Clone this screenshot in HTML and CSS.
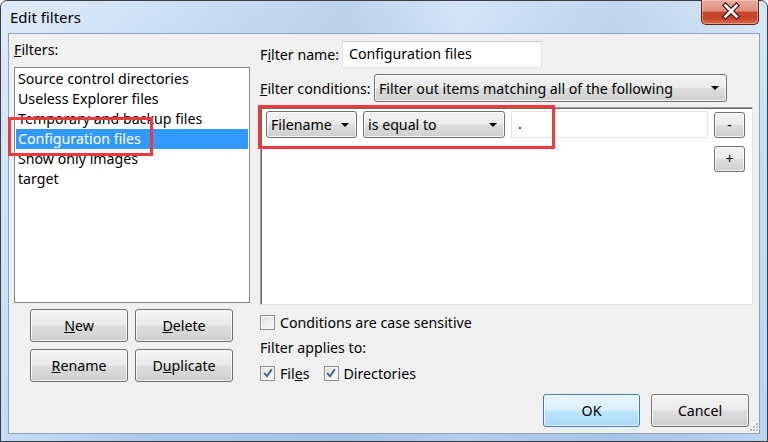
FILE: index.html
```html
<!DOCTYPE html>
<html lang="en">
<head>
  <meta charset="UTF-8">
  <title>Edit filters</title>
  <link rel="stylesheet" href="styles.css">
</head>
<body>
  <div class="screen">
    <div class="window">
      <div class="titlebar">
        <span class="title">Edit filters</span>
        <div class="close">
          <svg width="58" height="24" viewBox="0 0 58 24">
            <path d="M23.5 6.5 L34.5 17.5 M34.5 6.5 L23.5 17.5" stroke="#4b1710" stroke-width="5" stroke-linecap="square"/>
            <path d="M23.5 6.5 L34.5 17.5 M34.5 6.5 L23.5 17.5" stroke="#ffffff" stroke-width="2.6" stroke-linecap="square"/>
          </svg>
        </div>
      </div>

      <div class="client">
        <div class="left">
          <div class="label"><u>F</u>ilters:</div>
          <ul class="filter-list">
            <li>Source control directories</li>
            <li>Useless Explorer files</li>
            <li>Temporary and backup files</li>
            <li class="selected">Configuration files</li>
            <li>Show only images</li>
            <li>target</li>
          </ul>
          <div class="list-buttons">
            <div class="btn"><u>N</u>ew</div>
            <div class="btn"><u>D</u>elete</div>
            <div class="btn"><u>R</u>ename</div>
            <div class="btn">D<u>u</u>plicate</div>
          </div>
        </div>

        <div class="right">
          <div class="field-row name-row">
            <span class="name-label">F<u>i</u>lter name:</span>
            <div class="textbox name-input">Configuration files</div>
          </div>
          <div class="field-row cond-row">
            <span class="cond-label"><u>F</u>ilter conditions:</span>
            <div class="combo cond-combo">Filter out items matching all of the following<span class="arrow"></span></div>
          </div>

          <div class="conditions">
            <div class="combo">Filename<span class="arrow"></span></div>
            <div class="combo">is equal to<span class="arrow"></span></div>
            <div class="textbox value-input">.</div>
            <div class="btn small minus">-</div>
            <div class="btn small plus">+</div>
          </div>

          <div class="check-row case-row">
            <span class="checkbox"></span>Conditions are case sensitive
          </div>
          <div class="applies">Filter applies to:</div>
          <div class="check-row applies-row">
            <span class="checkbox checked">
              <svg width="10" height="10" viewBox="0 0 10 10"><path d="M1.2 5 L4 8.3 L8.8 1.2" fill="none" stroke="#3d5a98" stroke-width="1.9"/></svg>
            </span>Fil<u>e</u>s
            <span class="checkbox checked dirs">
              <svg width="10" height="10" viewBox="0 0 10 10"><path d="M1.2 5 L4 8.3 L8.8 1.2" fill="none" stroke="#3d5a98" stroke-width="1.9"/></svg>
            </span>Directories
          </div>

          <div class="dialog-buttons">
            <div class="btn default">OK</div>
            <div class="btn">Cancel</div>
          </div>
        </div>

        <svg class="grip" width="11" height="11" viewBox="0 0 11 11">
          <g fill="#ffffff">
            <rect x="9" y="2" width="2" height="2"/><rect x="6" y="5" width="2" height="2"/><rect x="9" y="5" width="2" height="2"/>
            <rect x="3" y="8" width="2" height="2"/><rect x="6" y="8" width="2" height="2"/><rect x="9" y="8" width="2" height="2"/>
          </g>
          <g fill="#b6b6b6">
            <rect x="8" y="1" width="2" height="2"/><rect x="5" y="4" width="2" height="2"/><rect x="8" y="4" width="2" height="2"/>
            <rect x="2" y="7" width="2" height="2"/><rect x="5" y="7" width="2" height="2"/><rect x="8" y="7" width="2" height="2"/>
          </g>
        </svg>
      </div>
    </div>

    <!-- red callouts drawn over the screenshot -->
    <div class="callout callout-list"></div>
    <div class="callout callout-cond"></div>
  </div>
</body>
</html>
```

FILE: styles.css
```css
* { box-sizing: border-box; }

body {
  margin: 0;
  background: #ffffff;
  font-family: 'Noto Sans', 'Open Sans', sans-serif;
  font-size: 14.2px;
  color: #000;
}

.screen {
  position: relative;
  width: 768px;
  height: 442px;
}

.window {
  width: 768px;
  height: 442px;
  display: flex;
  flex-direction: column;
  padding: 0 7px 7px 7px;
  border: 1px solid #3a3f47;
  border-radius: 7px 7px 0 0;
  background:
    linear-gradient(90deg, rgba(255,255,255,0.35) 0%, rgba(255,255,255,0) 20%, rgba(140,170,205,0.25) 45%, rgba(255,255,255,0.1) 60%, rgba(140,170,205,0.2) 80%, rgba(255,255,255,0.2) 100%),
    linear-gradient(180deg, #cfe1f5 0%, #b9d4f0 40%, #aac9ec 100%);
}

.titlebar {
  height: 32px;
  display: flex;
  justify-content: space-between;
  align-items: flex-start;
}

.title {
  padding: 5px 0 0 2px;
  font-size: 15px;
  line-height: 22px;
  color: #000;
}

.close {
  width: 58px;
  height: 25px;
  margin: -1px 1px 0 0;
  border: 1px solid #5b2219;
  border-top: none;
  border-radius: 0 0 5px 5px;
  background: linear-gradient(180deg, #e9ab9e 0%, #dc8d7c 45%, #c8452d 52%, #c5432b 75%, #db6a49 100%);
  box-shadow: inset 0 0 0 1px rgba(255, 220, 210, 0.45);
}

.close svg { display: block; margin-top: -1px; }

.client {
  position: relative;
  flex: 1;
  display: grid;
  grid-template-columns: 236px 493px;
  column-gap: 10px;
  padding: 0 6px 0 5px;
  background: #f0f0f0;
  border: 1px solid #8da2bb;
}

/* left column */

.label {
  margin-top: 6px;
  line-height: 20px;
}

.filter-list {
  list-style: none;
  margin: 7px 0 0 0;
  padding: 1px;
  height: 236px;
  background: #fff;
  border: 1px solid #828790;
}

.filter-list li {
  height: 20px;
  line-height: 20px;
  padding-left: 2px;
  white-space: nowrap;
}

.filter-list li.selected {
  background: #3399ff;
  color: #fff;
}

.list-buttons {
  display: grid;
  grid-template-columns: 98px 98px;
  grid-auto-rows: 33px;
  gap: 7px;
  margin: 6px 0 0 16px;
}

.btn {
  display: flex;
  align-items: center;
  justify-content: center;
  border: 1px solid #707070;
  border-radius: 3px;
  background: linear-gradient(180deg, #f2f2f2 0%, #ebebeb 48%, #dddddd 52%, #cfcfcf 100%);
  box-shadow: inset 0 0 0 1px rgba(255, 255, 255, 0.75);
  line-height: 20px;
}

.btn.default {
  border-color: #3c7fb1;
  background: linear-gradient(180deg, #eaf6fd 0%, #d9f0fc 48%, #bee6fd 52%, #a7d9f5 100%);
}

/* right column */

.field-row {
  display: flex;
  align-items: center;
  white-space: nowrap;
}

.name-row { margin-top: 7px; height: 27px; }
.cond-row { margin-top: 6px; height: 28px; }

.name-label { width: 82px; flex-shrink: 0; }
.cond-label { width: 114px; flex-shrink: 0; }

.textbox {
  background: #fff;
  border: 1px solid #e0e2e6;
  border-top-color: #c9ccd2;
  padding-left: 6px;
  line-height: 24px;
}

.name-input {
  width: 200px;
  height: 27px;
}

.combo {
  position: relative;
  display: flex;
  align-items: center;
  padding-left: 4px;
  border: 1px solid #707070;
  border-radius: 3px;
  background: linear-gradient(180deg, #f2f2f2 0%, #ebebeb 48%, #dddddd 52%, #cfcfcf 100%);
  box-shadow: inset 0 0 0 1px rgba(255, 255, 255, 0.75);
  white-space: nowrap;
}

.cond-combo {
  width: 353px;
  height: 28px;
}

.arrow {
  position: absolute;
  right: 7px;
  top: 50%;
  margin-top: -2px;
  border-left: 4px solid transparent;
  border-right: 4px solid transparent;
  border-top: 4px solid #000;
}

.conditions {
  margin-top: 5px;
  height: 198px;
  display: grid;
  grid-template-columns: 91px 142px 197px 31px;
  grid-template-rows: 27px 26px;
  column-gap: 6px;
  row-gap: 8px;
  align-content: start;
  padding: 3px 0 0 5px;
  background: #fff;
  border: 1px solid;
  border-color: #a0a0a0 #e3e3e3 #e3e3e3 #a0a0a0;
  box-shadow: inset 1px 1px 0 #696969;
}

.value-input {
  height: 27px;
  border-color: #e3e3e3;
}

.btn.small {
  height: 26px;
  align-self: end;
}

.btn.plus {
  grid-column: 4;
  grid-row: 2;
}

.check-row {
  display: flex;
  align-items: center;
  height: 20px;
}

.case-row { margin-top: 7px; }
.applies-row { margin-top: 5px; }

.applies {
  margin-top: 6px;
  line-height: 20px;
}

.checkbox {
  width: 15px;
  height: 15px;
  margin-right: 5px;
  display: flex;
  align-items: center;
  justify-content: center;
  border: 1px solid #8e8f8f;
  background: linear-gradient(135deg, #dcdcdc 0%, #f0f0f0 60%, #ffffff 100%);
  box-shadow: inset 0 0 0 1px #f4f4f4;
}

.checkbox.dirs { margin-left: 14px; }

.dialog-buttons {
  display: flex;
  justify-content: flex-end;
  gap: 11px;
  margin: 11px 4px 0 0;
}

.dialog-buttons .btn {
  width: 98px;
  height: 33px;
}

.dialog-buttons .btn.default { width: 97px; }

.grip {
  position: absolute;
  right: 0;
  bottom: 0;
}

/* callouts */

.callout {
  position: absolute;
  border: 3px solid #ec3a3d;
}

.callout-list {
  left: 8px;
  top: 117px;
  width: 145px;
  height: 39px;
}

.callout-cond {
  left: 258px;
  top: 105px;
  width: 297px;
  height: 44px;
}
```
